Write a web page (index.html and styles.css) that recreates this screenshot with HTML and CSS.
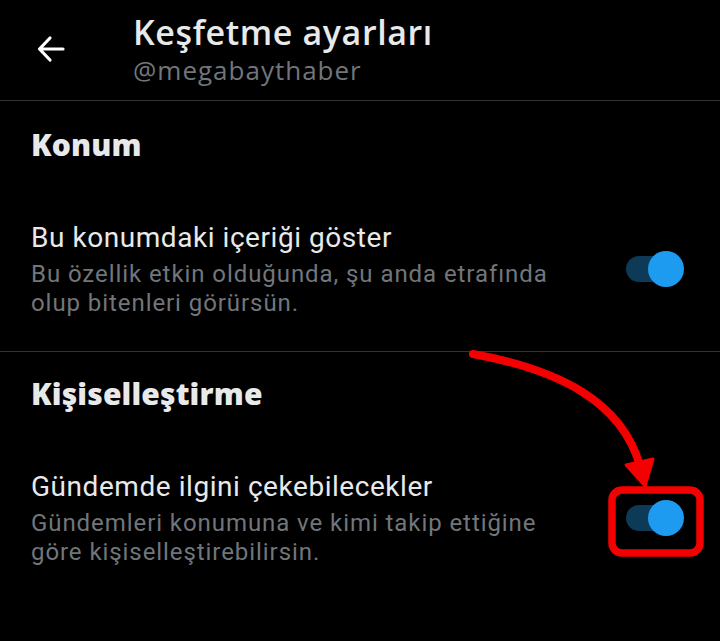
FILE: index.html
```html
<!DOCTYPE html>
<html lang="tr">
<head>
    <meta charset="UTF-8">
    <meta name="viewport" content="width=device-width, initial-scale=1.0">
    <title>Keşfetme ayarları</title>
    <link rel="stylesheet" href="styles.css">
</head>
<body>
    <div class="screen">
        <header class="topbar">
            <div class="back">
                <svg width="30" height="30" viewBox="0 0 30 30">
                    <path d="M27 15H4M14 4L3.5 15 14 26" fill="none" stroke="#fff" stroke-width="3.2" stroke-linecap="round" stroke-linejoin="round"/>
                </svg>
            </div>
            <div class="titles">
                <h1>Keşfetme ayarları</h1>
                <div class="handle">@megabaythaber</div>
            </div>
        </header>

        <section class="group">
            <h2>Konum</h2>
            <div class="row">
                <div class="text">
                    <div class="label">Bu konumdaki içeriği göster</div>
                    <div class="desc">Bu özellik etkin olduğunda, şu anda etrafında olup bitenleri görürsün.</div>
                </div>
                <div class="switch on"><span class="knob"></span></div>
            </div>
        </section>

        <section class="group last">
            <h2>Kişiselleştirme</h2>
            <div class="row">
                <div class="text">
                    <div class="label">Gündemde ilgini çekebilecekler</div>
                    <div class="desc">Gündemleri konumuna ve kimi takip ettiğine göre kişiselleştirebilirsin.</div>
                </div>
                <div class="switch on"><span class="knob"></span></div>
            </div>
        </section>

        <!-- kırmızı işaretleme -->
        <svg class="markup" width="720" height="641" viewBox="0 0 720 641">
            <path d="M473 354 C 560 370 622 402 640 466" fill="none" stroke="#f50000" stroke-width="8" stroke-linecap="round"/>
            <polygon points="626,465 653,459 645,486" fill="#f50000" stroke="#f50000" stroke-width="3" stroke-linejoin="round"/>
            <rect x="612" y="490" width="88" height="63" rx="10" fill="none" stroke="#f50000" stroke-width="7.5"/>
        </svg>
    </div>
</body>
</html>
```

FILE: styles.css
```css
* {
    margin: 0;
    padding: 0;
    box-sizing: border-box;
}

body {
    background: #000;
    font-family: Roboto, 'Noto Sans', sans-serif;
    color: #e7e9ea;
}

.screen {
    position: relative;
    width: 720px;
    height: 641px;
    overflow: hidden;
    background: #000;
}

.topbar {
    height: 101px;
    display: flex;
    align-items: flex-start;
    border-bottom: 1px solid #2f3336;
    padding-left: 36px;
}

.back {
    width: 30px;
    height: 30px;
    margin-top: 34px;
    margin-right: 67px;
}

.titles h1 {
    font-family: 'Open Sans', Roboto, sans-serif;
    font-size: 34px;
    font-weight: 600;
    line-height: 44px;
    margin-top: 10px;
    letter-spacing: 0.6px;
    color: #e7e9ea;
}

.handle {
    font-family: 'Open Sans', Roboto, sans-serif;
    font-size: 26px;
    line-height: 32px;
    letter-spacing: 1px;
    color: #71767b;
    margin-top: 0;
}

.group {
    padding: 24px 36px 33px 31px;
    border-bottom: 1px solid #2f3336;
}

.group.last {
    border-bottom: none;
    padding-top: 22px;
}

.group h2 {
    font-family: 'Open Sans', Roboto, sans-serif;
    font-size: 30px;
    font-weight: 800;
    line-height: 40px;
    letter-spacing: 0.15px;
    color: #e7e9ea;
    margin-bottom: 55px;
}

.row {
    display: flex;
    align-items: center;
    gap: 40px;
}

.text {
    flex: 1;
}

.label {
    font-size: 28px;
    line-height: 36px;
    letter-spacing: 0.55px;
    color: #e7e9ea;
    margin-bottom: 4px;
}

.desc {
    font-size: 24px;
    line-height: 29px;
    letter-spacing: 0.93px;
    color: #71767b;
    max-width: 530px;
}

.switch {
    position: relative;
    width: 58px;
    height: 36px;
    flex-shrink: 0;
}

.switch::before {
    content: '';
    position: absolute;
    left: 0;
    top: 5px;
    width: 52px;
    height: 26px;
    border-radius: 13px;
    background: #0d3a57;
}

.knob {
    position: absolute;
    right: 0;
    top: 0;
    width: 36px;
    height: 36px;
    border-radius: 50%;
    background: #1d9bf0;
}

.markup {
    position: absolute;
    left: 0;
    top: 0;
    pointer-events: none;
}
```
